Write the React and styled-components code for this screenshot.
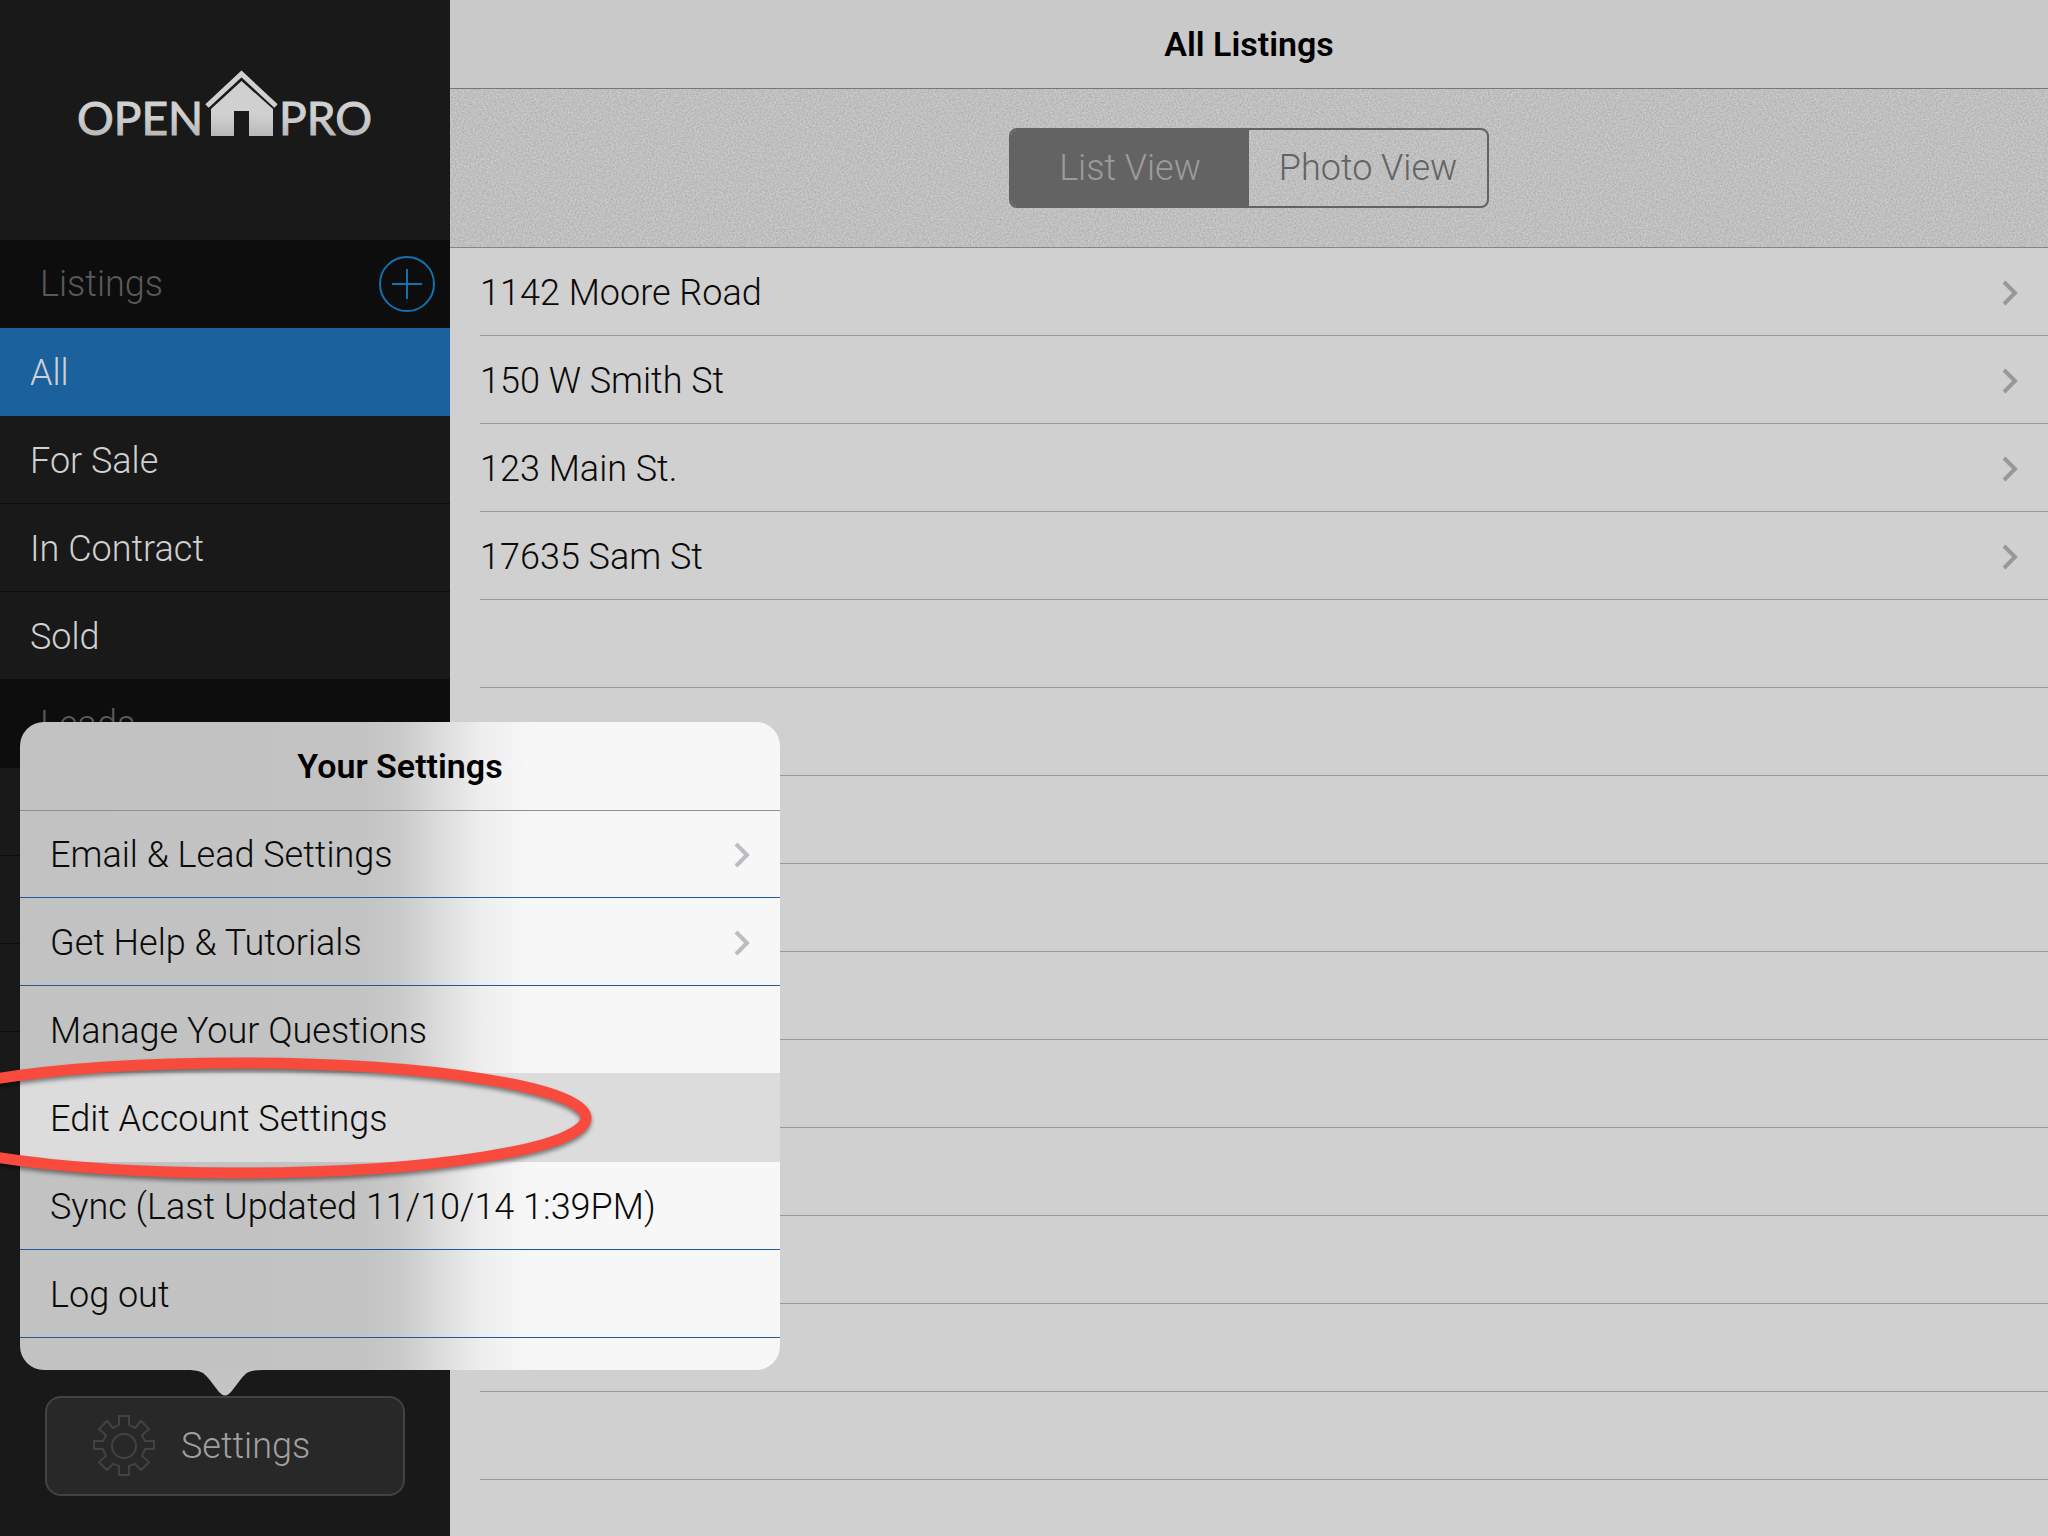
import styled, { createGlobalStyle } from "styled-components";

const GlobalStyle = createGlobalStyle`
  * {
    box-sizing: border-box;
  }

  body {
    margin: 0;
    font-family: Roboto, "Liberation Sans", sans-serif;
    font-size: 36px;
    font-weight: 300;
    line-height: 44px;
    color: #0a0a0a;
    background: #d0d0d0;
  }

  button {
    font: inherit;
    color: inherit;
    border: 0;
    padding: 0;
    background: none;
    cursor: pointer;
  }
`;

const Page = styled.div`
  position: relative;
  display: grid;
  grid-template-columns: 450px 1fr;
  height: 100vh;
  overflow: hidden;
`;

const Sidebar = styled.aside`
  display: flex;
  flex-direction: column;
  min-height: 0;
  color: #d0d0d0;
  background: #191919;
`;

const Brand = styled.h1`
  display: flex;
  justify-content: center;
  flex: none;
  height: 240px;
  margin: 0;
  padding-top: 70px;
`;

const SectionTitle = styled.h2`
  display: flex;
  align-items: center;
  justify-content: space-between;
  flex: none;
  height: 88px;
  margin: 0;
  padding: 0 15px 0 40px;
  font-size: 36px;
  font-weight: 300;
  color: #595959;
  background: #0d0d0d;
`;

const AddButton = styled.button`
  display: flex;
  color: #1470ae;
`;

const NavList = styled.ul`
  flex: none;
  list-style: none;
  margin: 0;
  padding: 0;
`;

const NavLink = styled.a`
  display: flex;
  align-items: center;
  height: 88px;
  padding: 2px 30px 0;
  border-bottom: 1px solid ${({ $active }) => ($active ? "#1b619d" : "#0d0d0d")};
  color: #d0d0d0;
  text-decoration: none;
  background: ${({ $active }) => ($active ? "#1b619d" : "transparent")};
`;

const SidebarFooter = styled.div`
  flex: none;
  margin-top: auto;
  padding: 0 45px 40px;
  background: #191919;
`;

const SettingsButton = styled.button`
  display: flex;
  align-items: center;
  gap: 26px;
  width: 100%;
  height: 100px;
  padding-left: 46px;
  border: 2px solid #424242;
  border-radius: 16px;
  color: #a0a0a0;
  background: #282828;
`;

const Main = styled.main`
  display: flex;
  flex-direction: column;
  min-width: 0;
  min-height: 0;
  overflow: hidden;
`;

const Title = styled.h2`
  flex: none;
  margin: 0;
  padding: 22px 0;
  border-bottom: 1px solid ${({ $line }) => $line || "transparent"};
  font-size: 34px;
  font-weight: 600;
  text-align: center;
  color: #000;
`;

const MainHeader = styled.header`
  flex: none;
  background: #c9c9c9;
`;

const Toolbar = styled.div`
  position: relative;
  display: flex;
  align-items: center;
  justify-content: center;
  flex: none;
  height: 159px;
  border-bottom: 1px solid #858585;
  background: #c0c0c0;
`;

const Grain = styled.svg`
  position: absolute;
  inset: 0;
  width: 100%;
  height: 100%;
`;

const Segmented = styled.div`
  position: relative;
  display: grid;
  grid-template-columns: 1fr 1fr;
  width: 480px;
  height: 80px;
  border: 2px solid #636363;
  border-radius: 8px;
  overflow: hidden;
`;

const Segment = styled.button`
  color: ${({ $active }) => ($active ? "#9b9b9b" : "#636363")};
  background: ${({ $active }) => ($active ? "#636363" : "transparent")};
`;

const Listings = styled.ul`
  flex: none;
  list-style: none;
  margin: 0;
  padding: 0 0 0 30px;
`;

const ListingRow = styled.li`
  height: 88px;
  border-bottom: 1px solid #99999b;
`;

const ListingLink = styled.a`
  display: flex;
  align-items: center;
  justify-content: space-between;
  height: 100%;
  padding: 2px 30px 0 0;
  color: #0a0a0a;
  text-decoration: none;
`;

const Popover = styled.section`
  position: absolute;
  left: 20px;
  bottom: 166px;
  width: 760px;
  padding-bottom: 32px;
  border-radius: 24px;
  background: linear-gradient(
    90deg,
    #c2c2c2 0,
    #c3c3c3 340px,
    #cacaca 380px,
    #dedede 424px,
    #eeeeee 462px,
    #f7f7f7 510px
  );
`;

const PopoverHeader = styled.header`
  height: 88px;
  box-shadow: 0 1px 0 #8f8f8f;
`;

const PopoverTail = styled.svg`
  position: absolute;
  left: 165px;
  top: 100%;
`;

const MenuItem = styled.button`
  display: flex;
  align-items: center;
  justify-content: space-between;
  width: 100%;
  height: 88px;
  padding: 2px 30px 0;
  text-align: left;
  border-bottom: 1px solid ${({ $selected }) => ($selected ? "#dcdcdc" : "#1b5c95")};
  background: ${({ $selected }) => ($selected ? "#dcdcdc" : "transparent")};
  box-shadow: ${({ $selected }) => ($selected ? "0 -1px 0 #dcdcdc" : "none")};
`;

const Highlight = styled.svg`
  position: absolute;
  left: -120px;
  bottom: 343px;
  pointer-events: none;
  filter: drop-shadow(0 3px 2px rgba(0, 0, 0, 0.45));
`;

const filters = ["All", "For Sale", "In Contract", "Sold"];

const leadFilters = ["All", "New", "Contacted"];

const listings = ["1142 Moore Road", "150 W Smith St", "123 Main St.", "17635 Sam St"];

const emptyRows = Array.from({ length: 11 }, (_, i) => i);

const menu = [
  { label: "Email & Lead Settings", more: true },
  { label: "Get Help & Tutorials", more: true },
  { label: "Manage Your Questions" },
  { label: "Edit Account Settings", selected: true },
  { label: "Sync (Last Updated 11/10/14 1:39PM)" },
  { label: "Log out" },
];

const Logo = () => (
  <svg width="312" height="90" viewBox="-8 0 312 90" role="img" aria-label="Open Pro">
    <defs>
      <linearGradient id="metal" gradientUnits="userSpaceOnUse" x1="0" y1="45" x2="0" y2="66">
        <stop offset="0" stopColor="#d0d0d0" />
        <stop offset="1" stopColor="#b8b8b8" />
      </linearGradient>
    </defs>
    <g
      fill="url(#metal)"
      stroke="url(#metal)"
      strokeWidth="1"
      fontFamily="Lato, sans-serif"
      fontSize="46"
      fontWeight="400"
    >
      <text x="0" y="65">OPEN</text>
      <text x="295" y="65" textAnchor="end">PRO</text>
    </g>
    <path d="M130 36 164.500 4 199 36" fill="none" stroke="#d0d0d0" strokeWidth="5" />
    <path d="M134 39 164.500 11 196 39V66H172V41H157V66H134Z" fill="url(#metal)" />
  </svg>
);

const PlusIcon = () => (
  <svg width="56" height="56" viewBox="0 0 56 56" fill="none" stroke="currentColor" strokeWidth="2">
    <circle cx="28" cy="28" r="27" />
    <path d="M28 13V43M13 28H43" />
  </svg>
);

const Chevron = ({ color }) => (
  <svg width="16" height="26" viewBox="0 0 16 26" fill="none" stroke={color} strokeWidth="4">
    <path d="M2 2 13 13 2 24" />
  </svg>
);

const GearIcon = () => (
  <svg width="62" height="62" viewBox="0 0 62 62" fill="none" stroke="#424242" strokeWidth="2">
    <path d="M26 1H36V10L42 13 48 6 56 14 49 20 52 26H61V34H52L49 41 56 47 48 55 42 49 36 51V60H26V51L20 49 14 55 6 47 13 41 10 34H1V26H10L13 20 6 14 14 6 20 13 26 10Z" />
    <circle cx="31" cy="31" r="12" />
  </svg>
);

const SettingsPopover = () => (
  <Popover aria-label="Your Settings">
    <PopoverHeader>
      <Title>Your Settings</Title>
    </PopoverHeader>
    {menu.map(({ label, more, selected }) => (
      <MenuItem key={label} type="button" $selected={selected}>
        {label}
        {more && <Chevron color="#bcbcc1" />}
      </MenuItem>
    ))}
    <PopoverTail width="80" height="26" viewBox="0 0 80 26">
      <path d="M0 0C16 0 18 2 24 9L34 22Q40 29 46 22L56 9C62 2 64 0 80 0Z" fill="#c4c4c4" />
    </PopoverTail>
  </Popover>
);

const App = () => (
  <Page>
    <GlobalStyle />
    <Sidebar>
      <Brand>
        <Logo />
      </Brand>
      <SectionTitle>
        Listings
        <AddButton type="button" aria-label="Add listing">
          <PlusIcon />
        </AddButton>
      </SectionTitle>
      <NavList>
        {filters.map((name) => (
          <li key={name}>
            <NavLink href="#" $active={name === "All"}>
              {name}
            </NavLink>
          </li>
        ))}
      </NavList>
      <SectionTitle>Leads</SectionTitle>
      <NavList>
        {leadFilters.map((name) => (
          <li key={name}>
            <NavLink href="#" aria-label={name} />
          </li>
        ))}
      </NavList>
      <SidebarFooter>
        <SettingsButton type="button">
          <GearIcon />
          Settings
        </SettingsButton>
      </SidebarFooter>
    </Sidebar>
    <Main>
      <MainHeader>
        <Title $line="#777">All Listings</Title>
      </MainHeader>
      <Toolbar>
        <Grain aria-hidden="true">
          <filter id="grain" x="0" y="0" width="100%" height="100%" colorInterpolationFilters="sRGB">
            <feTurbulence type="fractalNoise" baseFrequency="0.6" numOctaves="2" />
            <feColorMatrix values="0.2 0 0 0 0.65 0.2 0 0 0 0.65 0.2 0 0 0 0.65 0 0 0 0 1" />
          </filter>
          <rect width="100%" height="100%" filter="url(#grain)" />
        </Grain>
        <Segmented>
          <Segment type="button" aria-pressed="true" $active>
            List View
          </Segment>
          <Segment type="button" aria-pressed="false">
            Photo View
          </Segment>
        </Segmented>
      </Toolbar>
      <Listings>
        {listings.map((address) => (
          <ListingRow key={address}>
            <ListingLink href="#">
              {address}
              <Chevron color="#98989c" />
            </ListingLink>
          </ListingRow>
        ))}
        {emptyRows.map((row) => (
          <ListingRow key={row} />
        ))}
      </Listings>
    </Main>
    <SettingsPopover />
    <Highlight width="720" height="150" viewBox="0 0 720 150">
      <ellipse cx="359" cy="75" rx="347" ry="55" fill="none" stroke="#f84b3e" strokeWidth="11" />
    </Highlight>
  </Page>
);

export default App;
